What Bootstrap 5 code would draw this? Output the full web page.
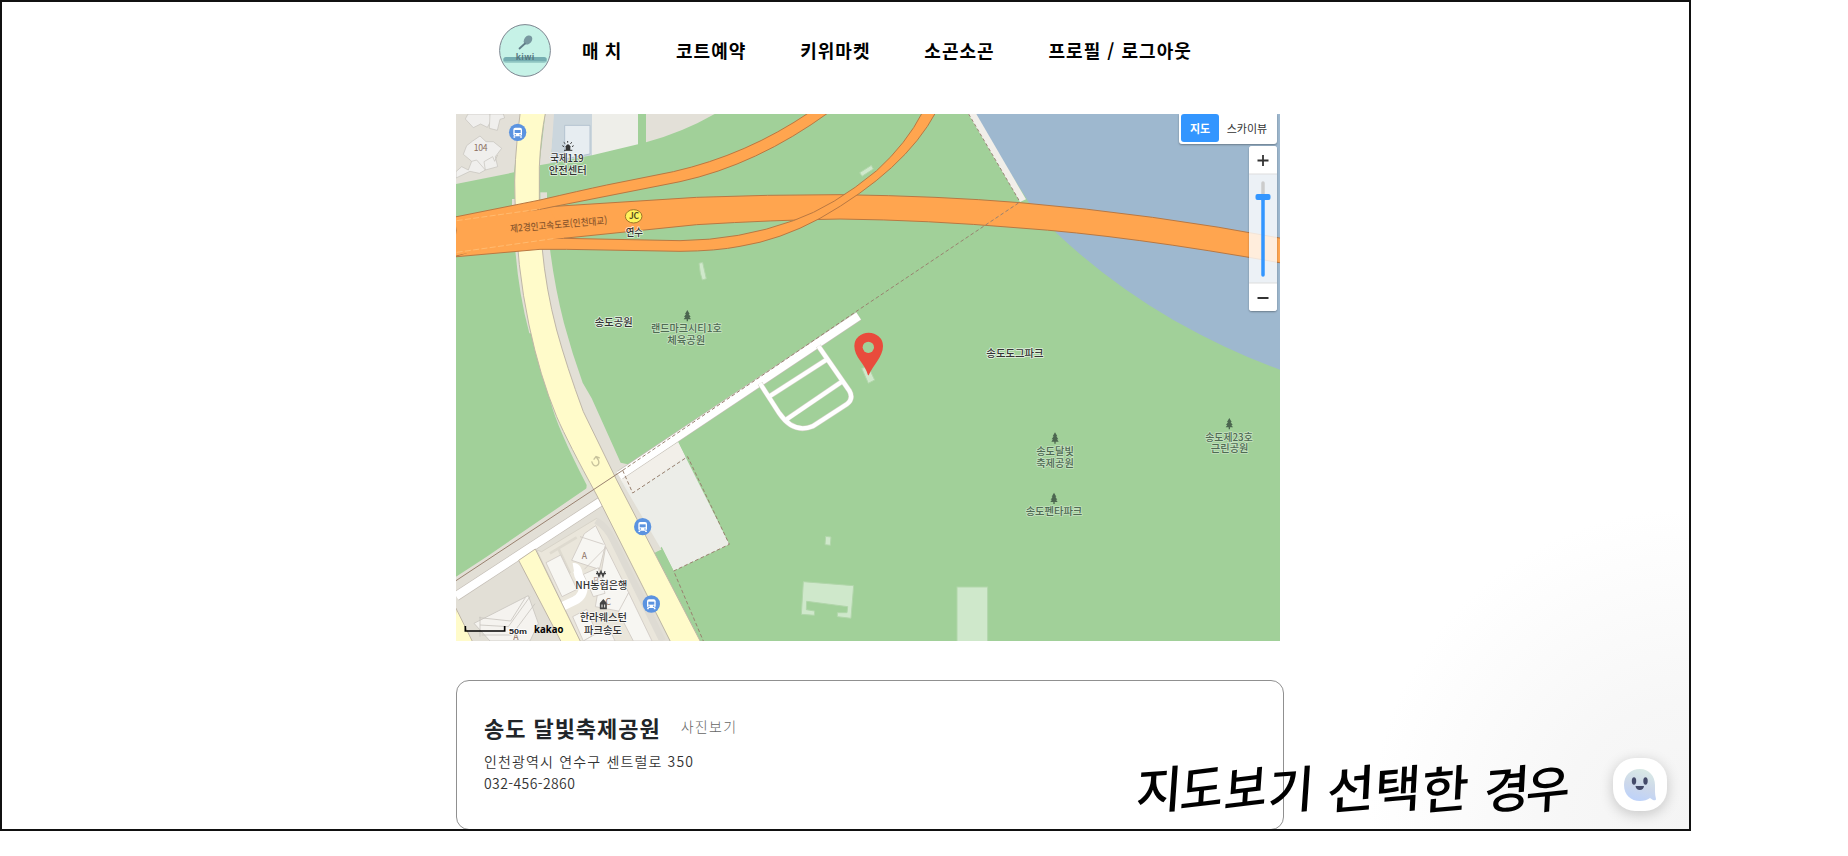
<!DOCTYPE html>
<html lang="ko">
<head>
<meta charset="utf-8">
<meta name="viewport" content="width=device-width, initial-scale=1">
<title>kiwi</title>
<link href="https://cdn.jsdelivr.net/npm/bootstrap@5.3.0/dist/css/bootstrap.min.css" rel="stylesheet">
<style>
body{font-family:"Noto Sans CJK KR",sans-serif;background:#fff;overflow:hidden;color:#212529}
.frame{width:1691px;height:831px;border:2px solid #111;background:radial-gradient(ellipse 320px 320px at 100% 100%,#f4f4f4 0,#f7f7f7 40%,#fff 100%)}
.topbar{height:112px;padding:22px 0 0 497px}
.brand{width:52px;height:53px;margin-right:31px}
.menu{gap:53.7px;font-size:18px;font-weight:700;letter-spacing:1.05px;height:53px}
.menu .nav-link{color:#000;padding:0;line-height:52px;white-space:nowrap}
.menu .nav-link:first-child{word-spacing:-1px}
.mapbox{width:824px;height:527px;margin-left:454px}
.mapbox>svg{display:block}
.types{top:0;right:3px;width:98px;height:30px;padding:0 2px 2px;border-radius:0 0 3px 3px;box-shadow:0 1px 2px #0005;font-size:11px}
.types button{border:0;padding:0;background:none;color:#333;height:28px;line-height:25px}
.types .on{background:#3396ff;color:#fff;width:38px;border-radius:3px;font-weight:700}
.zoomer{top:32px;right:3px;width:28px;height:165px;border-radius:3px;box-shadow:0 1px 2px #0005}
.zoomer svg{display:block}
.court{width:828px;height:150px;margin:39px 0 0 454px;border:1px solid #909090;border-radius:13px;padding:29px 0 0 27px}
.court h2{font-size:22px;font-weight:700;letter-spacing:.95px;line-height:34px;margin:0;color:#212529}
.court a{font-size:14px;font-weight:300;letter-spacing:1.35px;color:#666;margin-left:20px;line-height:32px;padding-bottom:2px}
.court p{font-size:14px;font-weight:350;letter-spacing:1.15px;line-height:21.5px;margin:0;color:#333}
.court .addr{margin-top:7px}
.court .tel{letter-spacing:.4px}
.caption-note{left:1130px;top:750px}
.chat{left:1611px;top:756px;width:54px;height:53px;border-radius:22px;box-shadow:0 3px 14px #0003}
.lb{font-size:31px;text-anchor:middle;fill:#333;stroke:#fff;stroke-opacity:.7;stroke-width:5px;stroke-linejoin:round;paint-order:stroke;font-weight:500}
.lb.park{fill:#4f6a53;stroke-opacity:.4;font-weight:500}
.bd{font-size:26px;fill:#8c6f62;text-anchor:middle}
</style>
</head>
<body>
<main class="frame position-relative overflow-hidden">
<header class="topbar d-flex align-items-start">
<svg class="brand" viewBox="0 0 52 53"><ellipse cx="26" cy="26.5" rx="25.4" ry="25.9" fill="#c6f2e7" stroke="#7d8590"/><rect x="4.3" y="33" width="43.5" height="5.5" rx="2.7" fill="#74adb0"/><path d="M4.5 37.8h43" stroke="#9ccfca"/><ellipse cx="29" cy="16" rx="3.8" ry="5" transform="rotate(38 29 16)" fill="#7898a0"/><path d="M26 19.500l-5.500 5" stroke="#617d88" stroke-width="1.8" stroke-linecap="round"/><text x="26.3" y="36.3" text-anchor="middle" font-family="Open Sans,sans-serif" font-size="8.3" font-weight="700" letter-spacing=".4" fill="#56777f">kiwi</text></svg>
<nav class="nav menu flex-nowrap">
<a class="nav-link" href="#">매 치</a><a class="nav-link" href="#">코트예약</a><a class="nav-link" href="#">키위마켓</a><a class="nav-link" href="#">소곤소곤</a><a class="nav-link" href="#">프로필 / 로그아웃</a>
</nav>
</header>

<section class="mapbox position-relative overflow-hidden">
<svg width="824" height="527" viewBox="48 342 2472 1581">
<defs>
<g id="bus"><circle r="26" fill="#5b93e0"/><rect x="-13" y="-14" width="26" height="26" rx="6" fill="#fff"/><rect x="-9" y="-7" width="18" height="9" fill="#5b93e0"/><circle cx="-7" cy="7" r="2.3" fill="#5b93e0"/><circle cx="7" cy="7" r="2.3" fill="#5b93e0"/><path d="M-10 12v4M10 12v4" stroke="#fff" stroke-width="5"/></g>
<path id="tree" d="M0-17L7-5H4L10 4H6L11 11H2V17H-2V11H-11L-6 4H-10L-4-5H-7Z" fill="#4c6650"/>
</defs>
<rect x="48" y="342" width="2472" height="1581" fill="#a1d099"/>
<!-- water and pier -->
<path d="M1600 342H2520V1109Q2370 1056 2200 960Q2010 850 1850 700L1765 605Z" fill="#9eb8cf"/>
<path d="M1585 342H1609L1758 598L1740 606Z" fill="#f1eee9"/>
<path d="M1586 342L1740 606" fill="none" stroke="#998577" stroke-width="3" stroke-dasharray="10 7"/>
<!-- blocks at the north -->
<path d="M48 342H242L222 517L48 552Z" fill="#e3e0d8"/>
<g fill="#f0efed" stroke="#c4c1bb" stroke-width="2"><path d="M84 342L76 357L100 383L122 372L142 382L153 362L150 342Z"/><path d="M150 342L148 385L172 391L180 358L194 354L190 342Z"/><path d="M98 423L120 408L138 425L160 425L185 445L166 470L173 500L136 510L118 520L90 514L48 534V515L65 500L85 510L95 484L70 463L80 437Z"/><path d="M136 510L132 485L158 470L164 484L173 465M95 484L110 480L136 510" fill="none"/></g>
<path d="M316 342H345L332 490L298 496Z" fill="#e2dfd8"/>
<path d="M342 342H456V466L332 490Z" fill="#cbd6dd"/><path d="M374 376H450V462L374 477Z" fill="#e7edf1" stroke="#b5c3d0" stroke-width="3"/>
<path d="M456 342H594V433L456 466Z" fill="#eeeee9"/><path d="M618 342H824Q730 396 618 427Z" fill="#e3e0d8"/>
<!-- blocks at the south -->
<path d="M48 1732L235 1620L450 1490L490 1520L690 1923H48Z" fill="#e2dfd6"/>
<path d="M305 1655L470 1555L505 1600L665 1923H420L290 1650Z" fill="#eae6db" stroke="#d8d4c9" stroke-width="3"/>
<path d="M468 1562Q500 1580 520 1622L668 1923" fill="none" stroke="#dedbd3" stroke-width="20"/>
<path d="M330 1660L410 1612M355 1645L390 1720M410 1745L475 1715" stroke="#dedacf" stroke-width="8" fill="none"/>
<g fill="#f7f6f2" stroke="#cfc9c3" stroke-width="2.5"><path d="M433 1601L467 1577L496 1636L478 1708L395 1681Z"/><path d="M420 1610L491 1633M433 1708L496 1644"/><path d="M318 1688L362 1665L411 1768L366 1790Z"/><path d="M497 1640L566 1778L545 1835L466 1820Z"/><path d="M566 1778L636 1923H580L535 1836Z"/><path d="M398 1850L440 1828L470 1900L430 1923Z"/><path d="M430 1923L505 1880L525 1923Z"/><path d="M430 1723L475 1703L495 1780L460 1790Z"/></g>
<path d="M400 1702Q412 1700 416 1726L430 1754Q432 1788 404 1802L370 1818" fill="none" stroke="#fff" stroke-width="26"/>
<path d="M102 1870L265 1787L295 1870L270 1923H150Z" fill="#f5f3ef" stroke="#c9c5bf" stroke-width="2.5"/><path d="M118 1853L212 1863L256 1793M120 1875L205 1880L270 1790M125 1905H215L285 1811M120 1850V1910" fill="none" stroke="#c9c5bf" stroke-width="2.5"/>
<!-- service strips -->
<path d="M290 748H330Q344 860 372 970Q396 1060 428 1148L455 1195L542 1388L570 1394L545 1445L500 1420L400 1230L330 1000Z" fill="#e2dfd6"/>
<path d="M226 750H250L290 1000H268Q236 880 226 750Z" fill="#e2dfd6"/>
<path d="M332 1205Q350 1280 440 1455L438 1480L475 1465L360 1240Z" fill="#dfe2d3"/>
<path d="M48 1730L140 1670L520 1410L545 1430L480 1500L235 1640L48 1765Z" fill="#e2dfd6"/>
<rect x="301" y="577" width="20" height="30" fill="#e2dfd6"/><rect x="216" y="597" width="12" height="18" fill="#e2dfd6"/>
<!-- plaza -->
<path d="M540 1438L714 1326L868 1633L701 1713L665 1640L652 1655Z" fill="#ecede8"/><path d="M541 1438L714 1326L735 1369L578 1480Z" fill="#f2efe9"/>
<path d="M541 1438L665 1650L640 1660L530 1440Z" fill="#e2dfd6"/>
<path d="M650 1655L667 1648L701 1713L790 1923H777Z" fill="#a1d099"/>
<!-- white street -->
<path d="M48 1789L486 1502M540 1425L1256 948" stroke="#c5bfb7" stroke-width="29"/><path d="M48 1789L486 1502M537 1427L1256 948" stroke="#fff" stroke-width="25"/>
<!-- yellow roads -->
<g fill="#fffbca" stroke="#bfb6a7" stroke-width="3"><path d="M424 1930L286 1647L236 1681L366 1930"/><path d="M48 1825L100 1930H40Z"/>
<path d="M241 335Q220 490 225 600Q230 800 267 975Q300 1130 350 1250Q385 1330 470 1485L694 1930H784L530 1440L430 1235Q380 1100 350 990Q318 870 306 740Q294 620 298 500Q302 410 317 335Z"/></g>
<!-- motorway -->
<g fill="#ffa54f" stroke="#b97842" stroke-width="3">
<path d="M40 652L330 620L770 592Q980 584 1200 584Q1500 588 1740 608Q2140 642 2530 716V790Q2060 706 1740 684Q1460 660 1200 657Q1000 660 770 674L370 715L40 771Z"/>
<path d="M40 652L300 600Q420 572 500 555L700 515Q920 465 1110 336L1168 336Q950 495 720 545L330 622L200 650L60 735Z"/>
<path d="M40 771L300 748H380L720 754Q830 753 900 739Q1020 720 1140 655Q1395 510 1488 336H1448Q1400 430 1310 512Q1180 620 1060 662Q900 720 720 722L370 715L200 720Z"/></g>
<path d="M50 660L330 626L372 713L300 723L50 765Z" fill="#ffa54f"/><path d="M50 662L300 627M50 757L340 716" stroke="#ffc680" stroke-width="2" stroke-dasharray="18 7"/>
<!-- paths on foot -->
<g fill="none" stroke="#99816f" stroke-width="3"><path d="M48 1742L548 1411"/><g stroke-dasharray="11 7"><path d="M548 1411L1255 930L1740 606"/><path d="M548 1411L578 1479L743 1370L868 1633L701 1713L790 1923"/></g></g>
<g fill="none" stroke="#d2d1c5" stroke-width="16"><path d="M960 1150L1018 1240Q1060 1302 1118 1279L1220 1213Q1242 1197 1228 1172L1135 1038M990 1188L1158 1080M1038 1259L1204 1146"/></g><g fill="none" stroke="#fff" stroke-width="13"><path d="M960 1150L1018 1240Q1060 1302 1118 1279L1220 1213Q1242 1197 1228 1172L1135 1038M990 1188L1158 1080M1038 1259L1204 1146"/></g>
<!-- pale lots -->
<g fill="#cfe8cb" stroke="#b1d6aa" stroke-width="3"><path d="M777 790L788 787L799 836L787 840L781 820Z"/><path d="M1259 518L1294 496L1300 507L1266 529Z"/><path d="M1265 1105L1285 1150L1304 1140L1285 1100Z"/><path d="M1157 1609L1173 1611L1171 1636L1155 1634Z"/><path d="M1090 1745L1241 1757L1233 1855L1192 1850V1838L1221 1838L1223 1820L1100 1804L1099 1829L1124 1833L1123 1846L1084 1843Z"/><rect x="1551" y="1761" width="92" height="165"/></g>
<path d="M1284 1126C1275 1090 1243 1073 1243 1038A43 40 0 0 1 1329 1038C1329 1070 1300 1094 1286 1126Z" fill="#e94b3c"/><circle cx="1285" cy="1042" r="17" fill="#a1d099"/>
<use href="#bus" x="233" y="397"/><use href="#bus" x="608" y="1580"/><use href="#bus" x="634" y="1812"/>
<use href="#tree" x="742" y="947"/><use href="#tree" x="1845" y="1314"/><use href="#tree" x="2368" y="1271"/><use href="#tree" x="1842" y="1495"/>
<path d="M455 1384Q460 1400 470 1397Q480 1392 475 1380L468 1370M461 1379L468 1370L479 1374" fill="none" stroke="#c7c29c" stroke-width="4"/>
<path d="M377 450V439Q384 427 391 439V450Z" fill="#333"/><path d="M372 451H397M383 428V423M372 440L367 437M376 431L371 427M391 431L396 427M396 440L401 437" fill="none" stroke="#333" stroke-width="3"/>
<path d="M482 1825V1810L490 1801L498 1810V1825ZM490 1801V1825M480 1811H500" fill="none" stroke="#444" stroke-width="5"/>
<path d="M471 1714L477 1729L483 1714L489 1729L495 1714M468 1721H498" fill="none" stroke="#444" stroke-width="4"/>
<ellipse cx="581" cy="649" rx="25" ry="20" fill="#fff35c" stroke="#9c7528" stroke-width="3"/><text x="582" y="658" text-anchor="middle" font-size="25" font-weight="700" fill="#554d20">JC</text>
<g class="bd"><text x="122" y="452" textLength="42">104</text><text x="433" y="1678">A</text><text x="468" y="1751" opacity=".6">B</text><text x="505" y="1814">C</text><text x="228" y="1921">A</text></g>
<g class="lb">
<text x="381" y="487" textLength="100" lengthAdjust="spacingAndGlyphs">국제119</text><text x="383" y="522" textLength="114" lengthAdjust="spacingAndGlyphs">안전센터</text><text x="583" y="708" textLength="52" lengthAdjust="spacingAndGlyphs">연수</text>
<text x="521" y="977" textLength="114" lengthAdjust="spacingAndGlyphs">송도공원</text><text x="1725" y="1072" textLength="172" lengthAdjust="spacingAndGlyphs">송도도그파크</text>
<text x="484" y="1767" textLength="156" lengthAdjust="spacingAndGlyphs">NH농협은행</text><text x="490" y="1864" textLength="142" lengthAdjust="spacingAndGlyphs">한라웨스턴</text><text x="489" y="1901" textLength="114" lengthAdjust="spacingAndGlyphs">파크송도</text></g>
<g class="lb park"><text x="739" y="997" textLength="212" lengthAdjust="spacingAndGlyphs">랜드마크시티1호</text><text x="739" y="1032" textLength="114" lengthAdjust="spacingAndGlyphs">체육공원</text><text x="1845" y="1365" textLength="113" lengthAdjust="spacingAndGlyphs">송도달빛</text><text x="1845" y="1400" textLength="113" lengthAdjust="spacingAndGlyphs">축제공원</text><text x="2367" y="1322" textLength="142" lengthAdjust="spacingAndGlyphs">송도제23호</text><text x="2369" y="1357" textLength="113" lengthAdjust="spacingAndGlyphs">근린공원</text><text x="1842" y="1545" textLength="170" lengthAdjust="spacingAndGlyphs">송도펜타파크</text></g>
<text x="356" y="684" transform="rotate(-5 356 674)" text-anchor="middle" textLength="292" lengthAdjust="spacingAndGlyphs" font-size="29" font-weight="500" fill="#8c572c">제2경인고속도로(인천대교)</text>
<path d="M76 1878V1893H194V1878" fill="none" stroke="#000" stroke-width="5"/><text x="207" y="1901" font-family="Liberation Sans" font-weight="700" font-size="23" textLength="54" lengthAdjust="spacingAndGlyphs" fill="#222" stroke="#fff" stroke-width="4" paint-order="stroke">50m</text><text x="282" y="1898" font-size="34" font-family="Open Sans,sans-serif" font-weight="700" textLength="88" lengthAdjust="spacingAndGlyphs">kakao</text>
</svg>
<div class="types position-absolute bg-white d-flex"><button class="on">지도</button><button class="flex-fill">스카이뷰</button></div>
<div class="zoomer position-absolute overflow-hidden"><svg width="28" height="165"><rect width="28" height="165" fill="#fff" opacity=".8"/><rect width="28" height="28" fill="#fff"/><rect y="137" width="28" height="28" fill="#fff"/><path d="M0 28h28M0 137h28" stroke="#ddd"/><path d="M8.500 14.500h11M14 9v11M8.500 152h11" stroke="#333" stroke-width="1.8"/><path d="M14 37V54" stroke="#ccc" stroke-width="3.5" stroke-linecap="round"/><path d="M14 50V129" stroke="#3396ff" stroke-width="3.5" stroke-linecap="round"/><rect x="6.500" y="48" width="15" height="6" rx="2" fill="#3396ff"/></svg></div>
</section>

<section class="court">
<div class="d-flex align-items-center"><h2>송도 달빛축제공원</h2><a class="text-decoration-none" href="#">사진보기</a></div>
<p class="addr">인천광역시 연수구 센트럴로 350</p><p class="tel">032-456-2860</p>
</section>

<!-- handwritten note: every word leans on its own, on one shared line -->
<svg class="caption-note position-absolute" width="450" height="76" fill="#000" font-size="50" font-weight="500"><text transform="translate(3 58) skewY(-4) skewX(-4)" textLength="46" lengthAdjust="spacingAndGlyphs"><tspan>지</tspan></text><text transform="translate(47 58) skewY(-7) skewX(-4)" textLength="43" lengthAdjust="spacingAndGlyphs">도</text><text transform="translate(91 58) skewY(-7) skewX(-4)" textLength="43" lengthAdjust="spacingAndGlyphs">보</text><text transform="translate(135 58) skewY(-4) skewX(-4)" textLength="46" lengthAdjust="spacingAndGlyphs">기</text><text transform="translate(194 58) skewY(-5) skewX(-3)" textLength="48" lengthAdjust="spacingAndGlyphs">선</text><text transform="translate(242 58) skewY(-5) skewX(-3)" textLength="46" lengthAdjust="spacingAndGlyphs">택</text><text transform="translate(289 58) skewY(-5) skewX(-3)" textLength="47" lengthAdjust="spacingAndGlyphs">한</text><text transform="translate(351 58) skewY(-5) skewX(-3)" textLength="46" lengthAdjust="spacingAndGlyphs">경</text><text transform="translate(393 58) skewY(-6) skewX(-3)" textLength="44" lengthAdjust="spacingAndGlyphs">우</text></svg>
<button class="chat position-absolute bg-white border-0 p-0 d-flex align-items-center justify-content-center" aria-label="chat"><svg width="34" height="34" viewBox="0 0 34 34"><defs><linearGradient id="gh" x1=".7" y1="0" x2=".4" y2="1"><stop offset="0" stop-color="#d9eae5"/><stop offset=".55" stop-color="#cdd8ea"/><stop offset="1" stop-color="#bdd2fa"/></linearGradient></defs><path d="M17 1C26 1 32 8 32 17V24Q32 27 33 31Q33 33 30 32L27 30Q23 33 17 33C8 33 1 27 1 17S8 1 17 1Z" fill="url(#gh)"/><ellipse cx="11" cy="13" rx="2.200" ry="3.700" fill="#444a69"/><ellipse cx="22.500" cy="13" rx="2.200" ry="3.700" fill="#444a69"/><path d="M12.500 18h8.500Q20.500 22 16.800 22T12.500 18Z" fill="#444a69"/></svg></button>
</main>
<script src="https://cdn.jsdelivr.net/npm/bootstrap@5.3.0/dist/js/bootstrap.bundle.min.js"></script>
</body>
</html>
